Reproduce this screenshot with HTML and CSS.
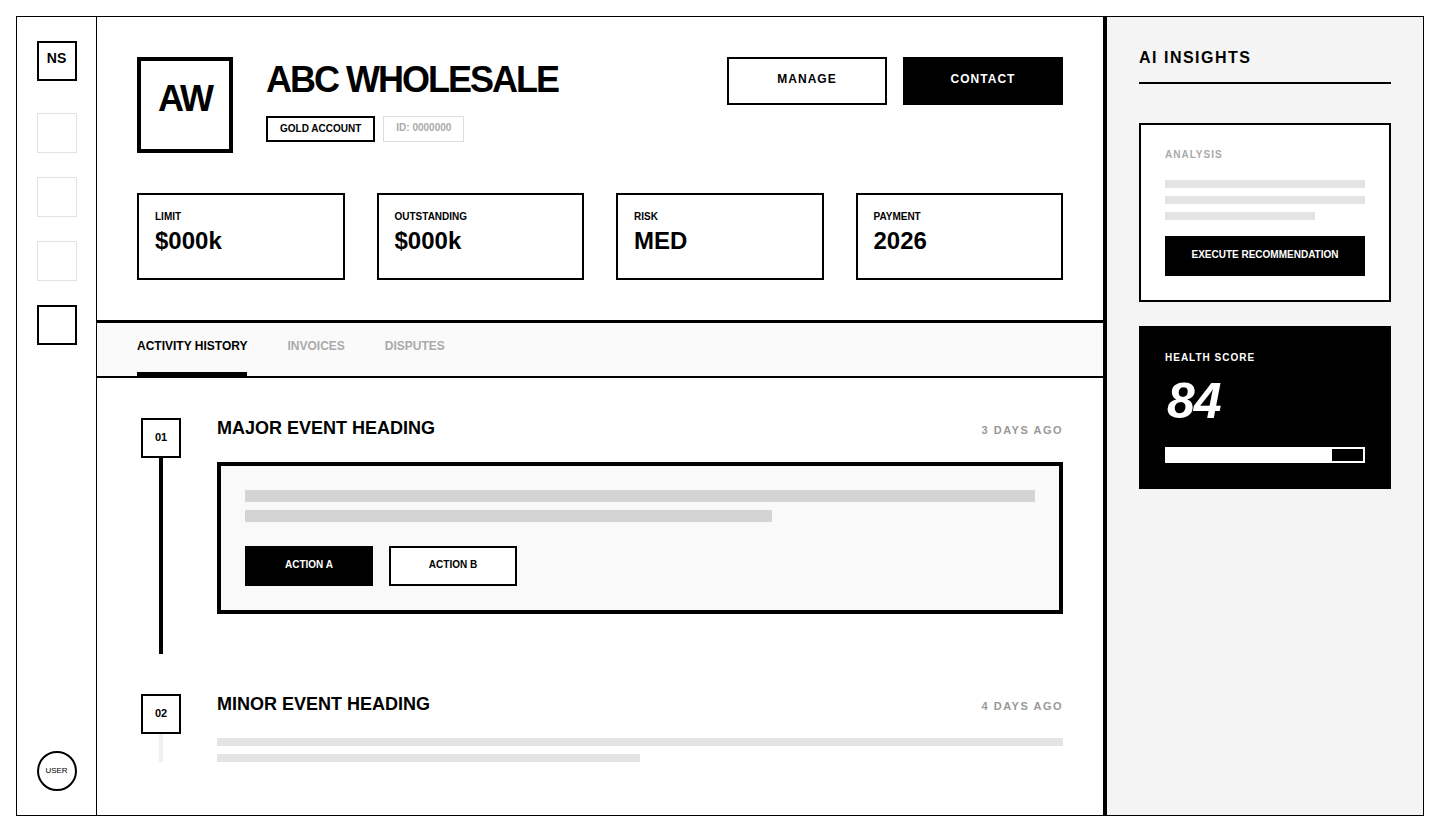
FILE: index.html
```html
<!DOCTYPE html>
<html lang="en">
<head>
  <meta charset="UTF-8">
  <meta name="viewport" content="width=device-width, initial-scale=1.0">
  <title>ABC Wholesale - Account</title>
  <link rel="stylesheet" href="styles.css">
</head>
<body>

<div class="frame">
  <nav class="sidebar">
    <div class="logo">NS</div>
    <div class="nav-item"></div>
    <div class="nav-item"></div>
    <div class="nav-item"></div>
    <div class="nav-item active"></div>
    <div class="user">USER</div>
  </nav>

  <main class="main">
    <header class="account">
      <div class="account-top">
        <div class="identity">
          <div class="avatar">AW</div>
          <div class="identity-text">
            <h1>ABC WHOLESALE</h1>
            <div class="badges">
              <span class="badge gold">GOLD ACCOUNT</span>
              <span class="badge muted">ID: 0000000</span>
            </div>
          </div>
        </div>
        <div class="actions">
          <button class="btn outline">MANAGE</button>
          <button class="btn solid">CONTACT</button>
        </div>
      </div>

      <div class="stats">
        <div class="stat">
          <div class="stat-label">LIMIT</div>
          <div class="stat-value">$000k</div>
        </div>
        <div class="stat">
          <div class="stat-label">OUTSTANDING</div>
          <div class="stat-value">$000k</div>
        </div>
        <div class="stat">
          <div class="stat-label">RISK</div>
          <div class="stat-value">MED</div>
        </div>
        <div class="stat">
          <div class="stat-label">PAYMENT</div>
          <div class="stat-value">2026</div>
        </div>
      </div>
    </header>

    <div class="tabs">
      <a class="tab active">ACTIVITY HISTORY</a>
      <a class="tab">INVOICES</a>
      <a class="tab">DISPUTES</a>
    </div>

    <section class="timeline">
      <div class="event major">
        <div class="event-rail">
          <div class="event-num">01</div>
          <div class="event-line"></div>
        </div>
        <div class="event-body">
          <div class="event-head">
            <h3>MAJOR EVENT HEADING</h3>
            <span class="event-time">3 DAYS AGO</span>
          </div>
          <div class="event-card">
            <div class="bar dark"></div>
            <div class="bar dark short"></div>
            <div class="event-actions">
              <button class="small-btn solid">ACTION A</button>
              <button class="small-btn outline">ACTION B</button>
            </div>
          </div>
        </div>
      </div>

      <div class="event minor">
        <div class="event-rail">
          <div class="event-num">02</div>
          <div class="event-line"></div>
        </div>
        <div class="event-body">
          <div class="event-head">
            <h3>MINOR EVENT HEADING</h3>
            <span class="event-time">4 DAYS AGO</span>
          </div>
          <div class="bar light"></div>
          <div class="bar light half"></div>
        </div>
      </div>
    </section>
  </main>

  <aside class="insights">
    <h2>AI INSIGHTS</h2>

    <div class="analysis">
      <div class="panel-label">ANALYSIS</div>
      <div class="bar light"></div>
      <div class="bar light"></div>
      <div class="bar light three-q"></div>
      <button class="exec-btn">EXECUTE RECOMMENDATION</button>
    </div>

    <div class="health">
      <div class="panel-label">HEALTH SCORE</div>
      <div class="score">84</div>
      <div class="progress"><div class="progress-fill" style="width: 84%"></div></div>
    </div>
  </aside>
</div>

</body>
</html>
```

FILE: styles.css
```css
* {
  box-sizing: border-box;
}
body {
  margin: 0;
  font-family: "Liberation Sans", Arial, sans-serif;
  color: #000;
  background-color: #fff;
}
h1, h2, h3 {
  margin: 0;
}
button {
  font-family: inherit;
  cursor: pointer;
}
.frame {
  margin: 16px;
  width: 1408px;
  height: 800px;
  border: 1px solid #000;
  display: flex;
  overflow: hidden;
}

/* sidebar */
.sidebar {
  width: 80px;
  flex-shrink: 0;
  border-right: 1px solid #000;
  display: flex;
  flex-direction: column;
  align-items: center;
  padding: 24px 0;
  gap: 24px;
}
.logo {
  width: 40px;
  height: 40px;
  border: 2px solid #000;
  display: flex;
  align-items: center;
  justify-content: center;
  font-size: 14px;
  font-weight: bold;
  padding-bottom: 6px;
  margin-bottom: 8px;
}
.nav-item {
  width: 40px;
  height: 40px;
  border: 1px solid #e2e2e2;
}
.nav-item.active {
  border: 2px solid #000;
}
.user {
  margin-top: auto;
  width: 40px;
  height: 40px;
  border: 2px solid #000;
  border-radius: 50%;
  display: flex;
  align-items: center;
  justify-content: center;
  font-size: 8px;
  padding-bottom: 2px;
}

/* main column */
.main {
  width: 1006px;
  flex-shrink: 0;
  overflow: hidden;
}
.account {
  padding: 40px;
  border-bottom: 3px solid #000;
}
.account-top {
  display: flex;
  justify-content: space-between;
  align-items: flex-start;
}
.identity {
  display: flex;
  gap: 33px;
}
.avatar {
  width: 96px;
  height: 96px;
  border: 4px solid #000;
  display: flex;
  align-items: center;
  justify-content: center;
  font-size: 36px;
  font-weight: bold;
  letter-spacing: -2px;
  padding-bottom: 12px;
}
.identity-text h1 {
  font-size: 36px;
  line-height: 40px;
  letter-spacing: -2px;
  margin: 3px 0 16px;
}
.badges {
  display: flex;
  gap: 8px;
}
.badge {
  font-size: 10px;
  font-weight: bold;
  line-height: 12px;
  height: 26px;
  padding: 5px 12px;
}
.badge.gold {
  border: 2px solid #000;
}
.badge.muted {
  border: 1px solid #ddd;
  color: #aaa;
  padding-top: 5px;
}
.actions {
  display: flex;
  gap: 16px;
}
.btn {
  width: 160px;
  height: 48px;
  border: 2px solid #000;
  font-size: 12px;
  font-weight: bold;
  letter-spacing: 1px;
  padding-bottom: 5px;
}
.btn.outline {
  background-color: #fff;
  color: #000;
}
.btn.solid {
  background-color: #000;
  color: #fff;
}
.stats {
  margin-top: 40px;
  display: grid;
  grid-template-columns: repeat(4, 1fr);
  gap: 32px;
}
.stat {
  height: 87px;
  border: 2px solid #000;
  padding: 16px;
}
.stat-label {
  font-size: 10px;
  font-weight: bold;
  line-height: 12px;
  margin-bottom: 4px;
}
.stat-value {
  font-size: 24px;
  font-weight: bold;
  line-height: 28px;
}

/* tabs */
.tabs {
  display: flex;
  gap: 40px;
  padding: 0 40px;
  background-color: #fafafa;
  border-bottom: 2px solid #000;
}
.tab {
  font-size: 12px;
  font-weight: bold;
  line-height: 16px;
  padding: 15px 0 18px;
  border-bottom: 4px solid transparent;
  color: #aaa;
}
.tab.active {
  color: #000;
  border-bottom-color: #000;
}

/* timeline */
.timeline {
  padding: 40px;
}
.event {
  display: grid;
  grid-template-columns: 48px 1fr;
  gap: 32px;
}
.event.major {
  padding-bottom: 40px;
  margin-bottom: 40px;
}
.event-rail {
  display: flex;
  flex-direction: column;
  align-items: center;
}
.event-num {
  width: 40px;
  height: 40px;
  border: 2px solid #000;
  display: flex;
  align-items: center;
  justify-content: center;
  font-size: 11px;
  font-weight: bold;
  padding-bottom: 3px;
}
.event-line {
  flex: 1;
  width: 4px;
  background-color: #000;
  margin-bottom: -40px;
}
.event.minor .event-line {
  background-color: #f0f0f0;
  margin-bottom: 0;
}
.event-head {
  display: flex;
  justify-content: space-between;
  align-items: baseline;
  margin-bottom: 24px;
}
.event-head h3 {
  font-size: 18px;
  line-height: 20px;
}
.event-time {
  font-size: 11px;
  font-weight: bold;
  letter-spacing: 1.5px;
  color: #999;
}
.event-card {
  border: 4px solid #000;
  background-color: #f9f9f9;
  padding: 24px;
}
.bar {
  height: 8px;
  margin-bottom: 8px;
}
.bar.dark {
  height: 12px;
  background-color: #d4d4d4;
}
.bar.light {
  background-color: #e4e4e4;
}
.bar.short {
  width: 66.7%;
}
.bar.half {
  width: 50%;
}
.bar.three-q {
  width: 75%;
}
.event-actions {
  display: flex;
  gap: 16px;
  margin-top: 24px;
}
.event-card .bar:last-of-type {
  margin-bottom: 0;
}
.event.minor .bar:last-child {
  margin-bottom: 0;
}
.small-btn {
  width: 128px;
  height: 40px;
  border: 2px solid #000;
  font-size: 10px;
  font-weight: bold;
  padding-bottom: 4px;
}
.small-btn.solid {
  background-color: #000;
  color: #fff;
}
.small-btn.outline {
  background-color: #fff;
  color: #000;
}

/* insights panel */
.insights {
  flex: 1;
  background-color: #f4f4f4;
  border-left: 4px solid #000;
  padding: 32px;
}
.insights h2 {
  font-size: 16px;
  line-height: 16px;
  letter-spacing: 1.5px;
  padding-bottom: 16px;
  margin-top: 1px;
  border-bottom: 2px solid #000;
}
.analysis {
  margin-top: 39px;
  background-color: #fff;
  border: 2px solid #000;
  padding: 24px;
}
.panel-label {
  font-size: 10px;
  font-weight: bold;
  line-height: 12px;
  letter-spacing: 1px;
}
.analysis .panel-label {
  color: #aaa;
  margin-bottom: 19px;
}
.exec-btn {
  display: block;
  width: 100%;
  height: 40px;
  margin-top: 16px;
  border: none;
  background-color: #000;
  color: #fff;
  font-size: 10px;
  font-weight: bold;
  padding-bottom: 5px;
}
.health {
  margin-top: 24px;
  background-color: #000;
  border: 2px solid #000;
  color: #fff;
  padding: 24px;
}
.score {
  font-size: 50px;
  line-height: 50px;
  font-weight: bold;
  font-style: italic;
  margin: 12px 0 21px;
  padding-left: 2px;
  letter-spacing: -1px;
}
.progress {
  height: 16px;
  border: 2px solid #fff;
}
.progress-fill {
  height: 100%;
  background-color: #fff;
}
```
